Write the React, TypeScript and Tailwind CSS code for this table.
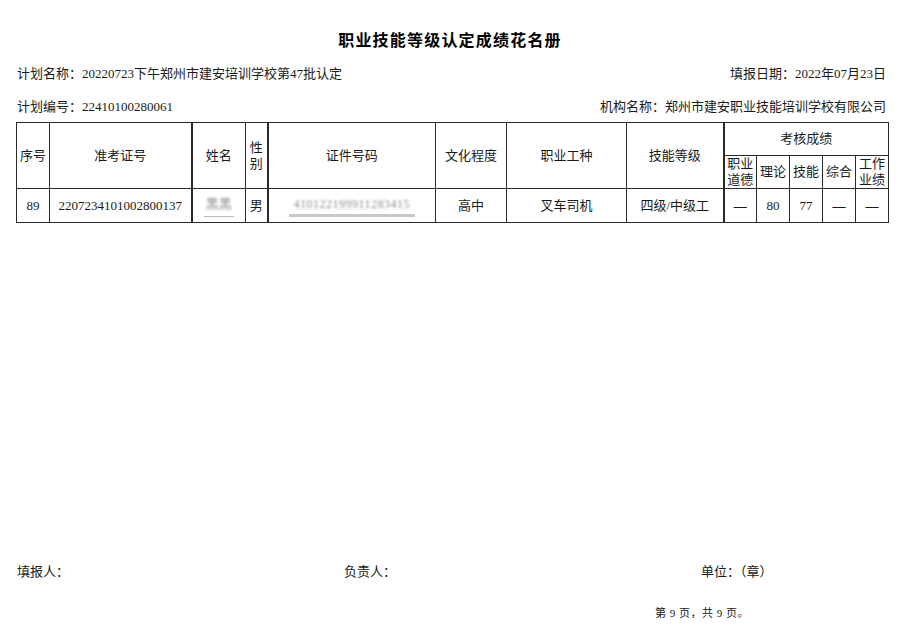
import React from "react";

const serif = { fontFamily: '"Liberation Serif", "Noto Sans CJK SC", serif' };

const th = "border border-[#2a2a2a] text-center font-normal text-[13px] leading-[16px] p-0";
const td = "border border-[#2a2a2a] text-center text-[13px] p-0 h-[34px]";

const App = () => {
  return (
    <div className="w-[900px] h-[639px] bg-white text-[#1a1a1a] relative overflow-hidden" style={serif}>
      <div className="pt-[29px] text-center">
        <h1
          className="text-[16px] leading-[20px] font-bold tracking-[1.2px] text-black"
          style={{ fontFamily: '"Noto Sans CJK SC", sans-serif' }}
        >
          职业技能等级认定成绩花名册
        </h1>
      </div>

      <div className="flex justify-between pl-[17px] pr-[14px] mt-[17px] text-[13px] leading-[16px]">
        <span>计划名称：20220723下午郑州市建安培训学校第47批认定</span>
        <span>填报日期：2022年07月23日</span>
      </div>
      <div className="flex justify-between pl-[17px] pr-[14px] mt-[17px] text-[13px] leading-[16px]">
        <span>计划编号：22410100280061</span>
        <span>机构名称：郑州市建安职业技能培训学校有限公司</span>
      </div>

      <table className="ml-[16px] mt-[7px] w-[872px] table-fixed border-collapse">
        <colgroup>
          <col className="w-[33px]" />
          <col className="w-[142px]" />
          <col className="w-[54px]" />
          <col className="w-[22px]" />
          <col className="w-[168px]" />
          <col className="w-[71px]" />
          <col className="w-[120px]" />
          <col className="w-[97px]" />
          <col className="w-[33px]" />
          <col className="w-[33px]" />
          <col className="w-[33px]" />
          <col className="w-[33px]" />
          <col className="w-[33px]" />
        </colgroup>
        <thead>
          <tr className="h-[33px]">
            <th rowSpan={2} className={th}>序号</th>
            <th rowSpan={2} className={th}>准考证号</th>
            <th rowSpan={2} className={`${th} border-l-2`}>姓名</th>
            <th rowSpan={2} className={th}>性<br />别</th>
            <th rowSpan={2} className={`${th} border-l-2`}>证件号码</th>
            <th rowSpan={2} className={th}>文化程度</th>
            <th rowSpan={2} className={th}>职业工种</th>
            <th rowSpan={2} className={th}>技能等级</th>
            <th colSpan={5} className={`${th} border-l-2`}>考核成绩</th>
          </tr>
          <tr className="h-[33px]">
            <th className={`${th} border-l-2`}>职业<br />道德</th>
            <th className={th}>理论</th>
            <th className={th}>技能</th>
            <th className={th}>综合</th>
            <th className={th}>工作<br />业绩</th>
          </tr>
        </thead>
        <tbody>
          <tr>
            <td className={td}>89</td>
            <td className={td}>2207234101002800137</td>
            <td className={`${td} border-l-2`}>
              <div className="flex flex-col items-center">
                <span className="text-[#8a8a8a] blur-[1.2px]">黑黑</span>
                <span className="block w-[30px] h-[1px] bg-[#bbbbbb] mt-[2px]" />
              </div>
            </td>
            <td className={td}>男</td>
            <td className={`${td} border-l-2`}>
              <div className="flex flex-col items-center">
                <span className="text-[#8f8f8f] blur-[1.2px] text-[12px] tracking-[0.5px]">410122199911283415</span>
                <span className="block w-[126px] h-[3px] bg-[#c8c8c8] mt-[1px]" />
              </div>
            </td>
            <td className={td}>高中</td>
            <td className={td}>叉车司机</td>
            <td className={td}>四级/中级工</td>
            <td className={`${td} border-l-2 font-bold`}>—</td>
            <td className={td}>80</td>
            <td className={td}>77</td>
            <td className={`${td} font-bold`}>—</td>
            <td className={`${td} font-bold`}>—</td>
          </tr>
        </tbody>
      </table>

      <div className="absolute left-0 right-0 top-[564px] text-[13px] leading-[16px]">
        <div className="flex pl-[17px]">
          <span className="w-[327px]">填报人：</span>
          <span className="w-[357px]">负责人：</span>
          <span>单位：（章）</span>
        </div>
        <div className="text-[11px] leading-[14px] mt-[26px] pl-[655px] tracking-[0.5px]">
          第 9 页，共 9 页。
        </div>
      </div>
    </div>
  );
};

export default App;
